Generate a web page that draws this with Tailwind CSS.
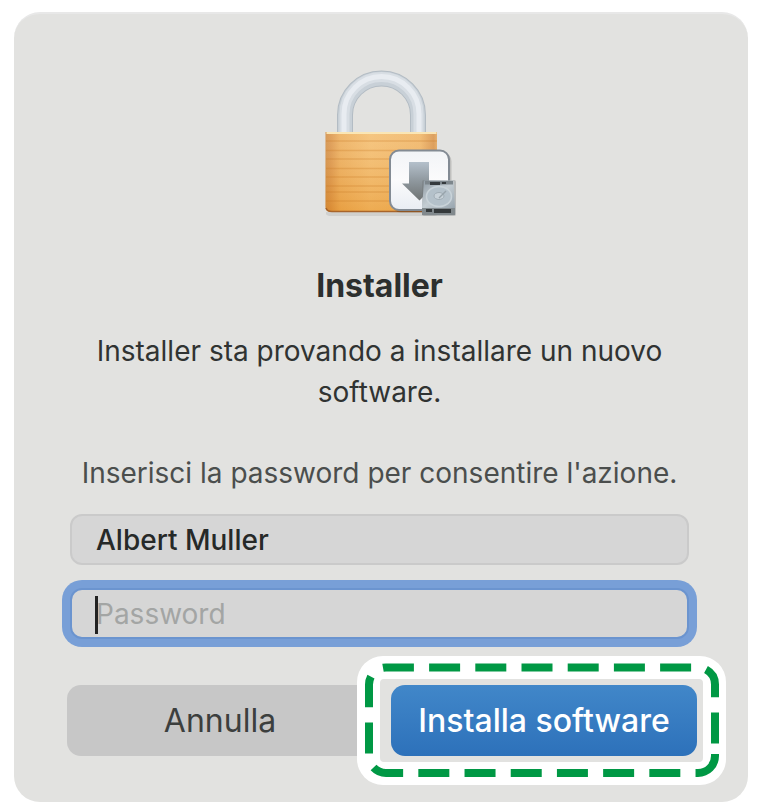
<!DOCTYPE html>
<html lang="it">
<head>
    <meta charset="UTF-8">
    <meta name="viewport" content="width=device-width, initial-scale=1.0">
    <title>Installer</title>
    <script src="https://cdn.jsdelivr.net/npm/@tailwindcss/browser@4"></script>
</head>
<body class="bg-white font-[Inter,Roboto,sans-serif] pt-3 pr-3 pb-2 pl-[14px]">
    <main class="bg-[#e2e2e0] rounded-[26px] border-t-2 border-[#e8e8e8] pt-[52px] pr-[59px] pb-[46px] pl-14">

        <!-- Lock icon with installer badge -->
        <svg class="block mx-auto w-[159px] h-[156px]" viewBox="300 66 159 156" aria-hidden="true">
            <defs>
                <linearGradient id="wood" x1="0" x2="1" y1="0" y2="0">
                    <stop offset="0" stop-color="#cd8538"/>
                    <stop offset=".05" stop-color="#d98e3d"/>
                    <stop offset=".13" stop-color="#eba850"/>
                    <stop offset=".4" stop-color="#f3b965"/>
                    <stop offset=".85" stop-color="#efb05b"/>
                    <stop offset=".97" stop-color="#d58c3f"/>
                    <stop offset="1" stop-color="#dfa052"/>
                </linearGradient>
                <linearGradient id="shade" x1="0" x2="0" y1="0" y2="1">
                    <stop offset="0" stop-color="#fff" stop-opacity=".18"/>
                    <stop offset="1" stop-color="#e08a20" stop-opacity=".3"/>
                </linearGradient>
                <linearGradient id="arrow" x1="0" x2="0" y1="0" y2="1">
                    <stop offset="0" stop-color="#b4c0cb"/>
                    <stop offset=".5" stop-color="#8e979d"/>
                    <stop offset="1" stop-color="#6f7373"/>
                </linearGradient>
                <linearGradient id="badge" x1="0" x2="0" y1="0" y2="1">
                    <stop offset="0" stop-color="#f2f4f7"/>
                    <stop offset=".5" stop-color="#fbfbfc"/>
                    <stop offset="1" stop-color="#e9edf3"/>
                </linearGradient>
                <linearGradient id="drive" x1="0" x2="1" y1="0" y2="1">
                    <stop offset="0" stop-color="#8f9ba4"/>
                    <stop offset=".5" stop-color="#c4cdd3"/>
                    <stop offset="1" stop-color="#97a4ae"/>
                </linearGradient>
            </defs>
            <g fill="none">
                <path d="M345 133V115a36.500 36.500 0 0 1 73 0V133" stroke="#b3bcc4" stroke-width="16"/>
                <path d="M345 133V115a36.500 36.500 0 0 1 73 0V133" stroke="#c8d0d7" stroke-width="14"/>
                <path d="M344.500 133V114a37 37 0 0 1 74 0V133" stroke="#d8dee4" stroke-width="10"/>
                <path d="M344 133V114a37.500 37.500 0 0 1 75 0V133" stroke="#e8ecf1" stroke-width="5"/>
            </g>
            <path d="M326 212h112v2q-1 2-5 2h-102q-4 0-5-2z" fill="#000" opacity=".08"/>
            <path d="M325.500 132H437v76q0 4-4 4H331.500q-6 0-6-5z" fill="url(#wood)"/>
            <path d="M325.500 132H437v76q0 4-4 4H331.500q-6 0-6-5z" fill="url(#shade)"/>
            <g stroke="#c97a24" stroke-width="1.500" opacity=".28">
                <path d="M326 141H437M326 150.500H437M326 159H437M326 168.500H437M326 177H437M326 186H437M326 192H437M326 201H437"/>
            </g>
            <path d="M326.500 133H436.500" stroke="#fae6b5" stroke-width="2"/>
            <path d="M326 208q1 3.500 6 3.500H437" fill="none" stroke="#a8642a" stroke-width="1.500"/>
            <rect x="391" y="151.500" width="60.500" height="61" rx="10" fill="#000" opacity=".15"/>
            <rect x="390" y="150.500" width="59" height="59.500" rx="9" fill="url(#badge)" stroke="#838b94" stroke-width="2"/>
            <path d="M409 162h20v21.500h7.500L419.500 200.500 402 183.500h7z" fill="url(#arrow)"/>
            <rect x="422" y="180" width="34" height="36" rx="2" fill="#6d7376" opacity=".35"/>
            <path d="M424 180.500h29.500l1.500 28h-33z" fill="url(#drive)"/>
            <path d="M425 181h28v3.500h-28z" fill="#7d868c"/>
            <path d="M430 182h10v3h-10zM442 182h4v2h-4z" fill="#353a3d"/>
            <ellipse cx="439" cy="196.500" rx="12.500" ry="10" fill="#b4c1ca" stroke="#c9d3d9" stroke-width="1.500"/>
            <ellipse cx="439" cy="196" rx="5" ry="3.500" fill="#c8d2d9" stroke="#a1adb5"/>
            <path d="M446 191l-7 7" stroke="#98a4ab" stroke-width="1.500"/>
            <path d="M422 208h33v7h-33z" fill="#81898d"/>
            <path d="M426 209h6v3h-6zM434 209h17v4h-17z" fill="#34393b"/>
        </svg>

        <h1 class="mt-11 text-center text-[32px] leading-10 font-bold text-[#2c2f2e]">Installer</h1>
        <p class="mt-[25px] text-center text-[28px] leading-[41px] text-[#303332]">Installer sta provando a installare un nuovo software.</p>
        <p class="mt-10 text-center text-[28px] leading-[41px] text-[#4b4e4d]">Inserisci la password per consentire l'azione.</p>

        <form class="mt-5">
            <input type="text" aria-label="Nome utente" value="Albert Muller"
                   class="block w-full h-[51px] px-6 bg-[#d6d6d6] border-2 border-[#cacaca] rounded-xl text-[28px] font-medium text-[#262928] outline-none">

            <div class="relative mt-[23px]">
                <input type="password" aria-label="Password" placeholder="Password"
                       class="block w-full h-[51px] px-6 bg-[#d6d6d6] border-2 border-[#6b94cf] ring-8 ring-[#789fd7] rounded-xl text-[28px] placeholder:text-[#a3a5a4] outline-none">
                <!-- Text cursor -->
                <span class="absolute left-[25px] top-2 w-[3px] h-[38px] bg-[#222]"></span>
            </div>

            <div class="mt-[46px] -ml-[3px] -mr-2 grid grid-cols-2 gap-[18px]">
                <button type="button" class="h-[71px] rounded-[14px] bg-[#c7c7c7] text-[32px] text-[#3c3f3e]">Annulla</button>
                <div class="relative">
                    <button type="submit" class="w-full h-[71px] rounded-[14px] bg-linear-to-b from-[#4187c9] to-[#2d71ba] text-[32px] font-medium text-white whitespace-nowrap">Installa software</button>
                    <!-- Highlight frame around the button -->
                    <svg class="absolute -left-[34px] -top-[29px] w-[calc(100%+63px)] h-[129px] pointer-events-none" viewBox="0 0 369 129" preserveAspectRatio="none" fill="none" aria-hidden="true">
                        <path fill="#fff" fill-rule="evenodd" d="M26 0H343a26 26 0 0 1 26 26V103a26 26 0 0 1-26 26H26a26 26 0 0 1-26-26V26a26 26 0 0 1 26-26zM27 23a4 4 0 0 0-4 4V102a4 4 0 0 0 4 4H342a4 4 0 0 0 4-4V27a4 4 0 0 0-4-4z"/>
                        <path stroke="#009844" stroke-width="8" stroke-dasharray="31 15.200" d="M358 98V100a17 17 0 0 1-17 17H29a17 17 0 0 1-17-17V28.500a17 17 0 0 1 17-17H341a17 17 0 0 1 17 17V98"/>
                    </svg>
                </div>
            </div>
        </form>
    </main>
</body>
</html>
